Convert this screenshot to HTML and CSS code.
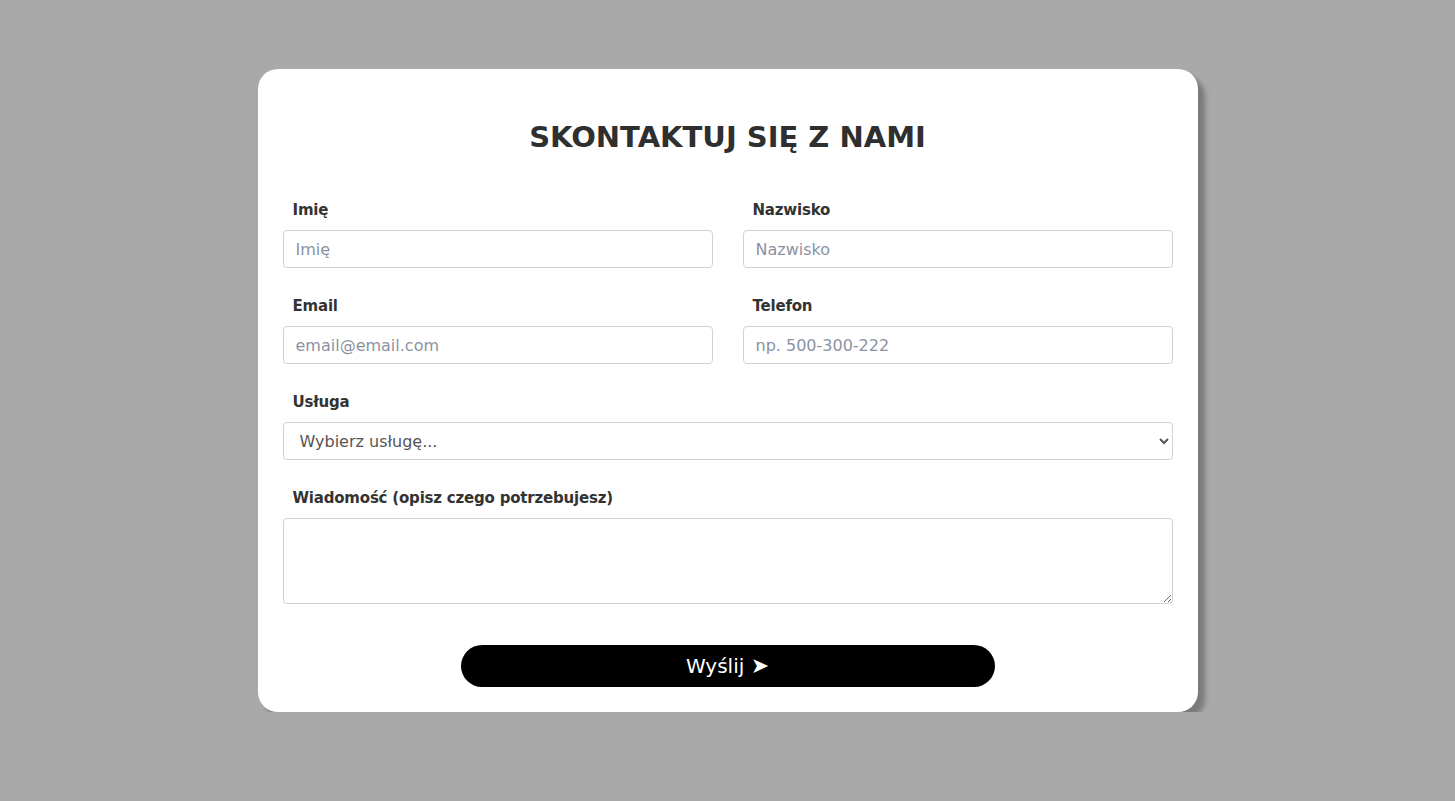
FILE: index.html
```html
<!DOCTYPE html>
<html lang="pl">
<head>
<meta charset="utf-8">
<title>Kontakt</title>
<link rel="stylesheet" href="styles.css">
</head>
<body>
<main class="page">
  <form class="card">
    <h1 class="title">SKONTAKTUJ SIĘ Z NAMI</h1>
    <div class="grid">
      <div class="field">
        <label class="label" for="imie">Imię</label>
        <input class="input" id="imie" type="text" placeholder="Imię">
      </div>
      <div class="field">
        <label class="label" for="nazwisko">Nazwisko</label>
        <input class="input" id="nazwisko" type="text" placeholder="Nazwisko">
      </div>
      <div class="field">
        <label class="label" for="email">Email</label>
        <input class="input" id="email" type="email" placeholder="email@email.com">
      </div>
      <div class="field">
        <label class="label" for="tel">Telefon</label>
        <input class="input" id="tel" type="tel" placeholder="np. 500-300-222">
      </div>
      <div class="field wide">
        <label class="label" for="usluga">Usługa</label>
        <select class="input select" id="usluga">
          <option>Wybierz usługę...</option>
        </select>
      </div>
      <div class="field wide">
        <label class="label" for="msg">Wiadomość (opisz czego potrzebujesz)</label>
        <textarea class="input area" id="msg"></textarea>
      </div>
    </div>
    <div class="actions">
      <button class="send" type="button">Wyślij <span class="arrow">➤</span></button>
    </div>
  </form>
</main>
</body>
</html>
```
FILE: styles.css
```css
html, body {
  margin: 0;
  padding: 0;
}
body {
  background: #a9a9a9;
  font-family: "DejaVu Sans", sans-serif;
  color: #333;
}
.page {
  display: flex;
  justify-content: center;
  padding-top: 69px;
}
.card {
  width: 940px;
  box-sizing: border-box;
  background: #fff;
  border-radius: 20px;
  box-shadow: 7px 7px 5px rgba(0, 0, 0, 0.28);
  padding: 49px 25px 25px;
}
.title {
  margin: 0 0 43px;
  text-align: center;
  font-size: 29px;
  line-height: 38px;
  font-weight: 700;
  color: #2f2f2f;
}
.grid {
  display: grid;
  grid-template-columns: 1fr 1fr;
  column-gap: 30px;
  row-gap: 27px;
}
.wide {
  grid-column: 1 / -1;
}
.field {
  display: flex;
  flex-direction: column;
}
.label {
  padding-left: 10px;
  font-size: 15px;
  letter-spacing: -0.2px;
  line-height: 22px;
  font-weight: 600;
  color: #333;
  margin-bottom: 9px;
}
.input {
  box-sizing: border-box;
  height: 38px;
  border: 1px solid #cfd2d8;
  border-radius: 4px;
  padding: 0 12px;
  font-family: inherit;
  font-size: 16px;
  color: #333;
  background: #fff;
  outline: none;
}
.input::placeholder {
  color: #8a93a4;
}
.select {
  padding-left: 12px;
  color: #555;
}
.area {
  height: 86px;
  padding: 10px 12px;
  resize: vertical;
}
.actions {
  display: flex;
  justify-content: center;
  padding-top: 41px;
}
.send {
  width: 534px;
  height: 42px;
  border: none;
  border-radius: 21px;
  background: #000;
  color: #fff;
  font-family: inherit;
  font-size: 20px;
  cursor: pointer;
}
.arrow {
  font-size: 22px;
  line-height: 1;
}
```
